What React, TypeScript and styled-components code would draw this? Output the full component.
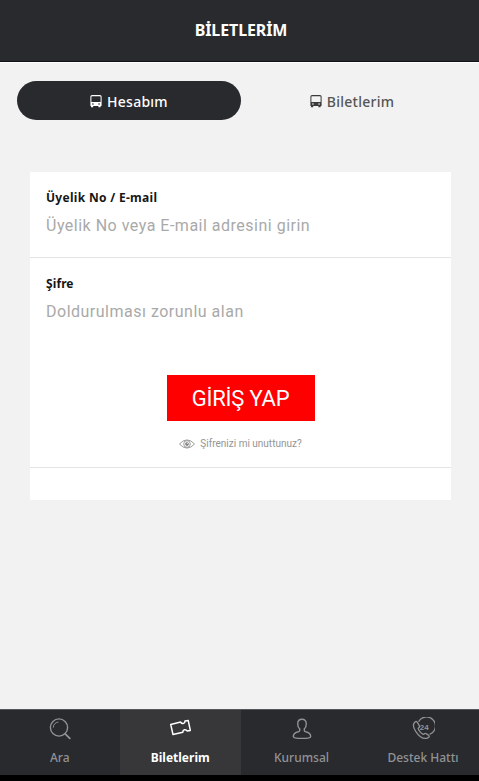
import React from "react";
import styled, { createGlobalStyle } from "styled-components";

const GlobalStyle = createGlobalStyle`
  * { box-sizing: border-box; }
  body { margin: 0; background: #f2f2f2; }
  button, input { font: inherit; border: 0; padding: 0; margin: 0; background: none; }
`;

const Screen = styled.div`
  display: flex;
  flex-direction: column;
  width: 100%;
  height: 781px;
  overflow: hidden;
  background: #f2f2f2;
  font-family: "Noto Sans", sans-serif;
`;

const Header = styled.header`
  flex: none;
  height: 62px;
  padding-top: 18px;
  background: #292a2e;
  border-bottom: 1px solid #101114;
  box-shadow: 0 1px 0 #fff;
  text-align: center;
`;

const Title = styled.h1`
  margin: 0;
  padding-left: 3px;
  color: #fff;
  font: 700 16px/24px "Noto Sans", sans-serif;
  letter-spacing: -0.1px;
`;

const Tabs = styled.nav`
  flex: none;
  display: grid;
  grid-template-columns: 224px 222px;
  padding: 19px 0 0 17px;
`;

const Tab = styled.button<{ $active?: boolean }>`
  display: flex;
  align-items: center;
  justify-content: center;
  gap: 5px;
  height: 39px;
  padding-top: 2px;
  border-radius: 20px;
  background: ${(p) => (p.$active ? "#292a2e" : "transparent")};
  color: ${(p) => (p.$active ? "#fff" : "#555")};
  font-size: 14px;
  font-weight: 500;
  letter-spacing: 0.25px;
  svg { color: ${(p) => (p.$active ? "#fff" : "#3b3b3b")}; }
`;

const Card = styled.form`
  flex: none;
  width: 421px;
  height: 328px;
  margin: 52px 0 0 30px;
  background: #fff;
`;

const Field = styled.label<{ $lined?: boolean }>`
  display: flex;
  flex-direction: column;
  height: 86px;
  padding: 16px 16px 0;
  border-bottom: 1px solid ${(p) => (p.$lined ? "#e4e4e4" : "transparent")};
`;

const FieldName = styled.span<{ $spacing: string }>`
  color: #161616;
  font-size: 12px;
  font-weight: 700;
  line-height: 20px;
  letter-spacing: ${(p) => p.$spacing};
`;

const Input = styled.input<{ $spacing: string }>`
  width: 100%;
  height: 24px;
  margin-top: 6px;
  outline: 0;
  color: #333;
  font: 400 16px/24px Roboto, sans-serif;
  letter-spacing: ${(p) => p.$spacing};
  &::placeholder { color: #a9a9a9; opacity: 1; }
`;

const Actions = styled.div`
  display: flex;
  flex-direction: column;
  align-items: center;
  height: 124px;
  padding-top: 31px;
  border-bottom: 1px solid #e4e4e4;
`;

const Submit = styled.button`
  width: 148px;
  height: 46px;
  padding-top: 2px;
  background: #ff0000;
  color: #fff;
  font: 400 22px/44px Roboto, sans-serif;
  letter-spacing: -0.2px;
`;

const Forgot = styled.a`
  display: flex;
  align-items: center;
  gap: 5px;
  margin-top: 15px;
  color: #949494;
  font: 400 10px/16px Roboto, sans-serif;
`;

const Footer = styled.footer`
  flex: none;
  display: grid;
  grid-template-columns: 119.5px 121.5px 121px 122px;
  height: 72px;
  margin-top: auto;
  overflow: hidden;
  background: #292a2e;
  border-top: 1px solid #55565a;
  border-bottom: 6px solid #000;
`;

const FooterItem = styled.a<{ $active?: boolean }>`
  display: flex;
  flex-direction: column;
  align-items: center;
  padding-top: 7px;
  background: ${(p) => (p.$active ? "#373739" : "transparent")};
  color: ${(p) => (p.$active ? "#fff" : "#929295")};
  font-size: 12px;
  font-weight: ${(p) => (p.$active ? 700 : 500)};
  line-height: 18px;
  white-space: nowrap;
  svg { flex: none; margin-bottom: 8px; }
`;

const BusIcon = () => (
  <svg width="12" height="13" viewBox="0 0 12 13" fill="currentColor">
    <path fillRule="evenodd" d="M2 0h8q1.6 0 1.6 1.6V11h-1v1.2H8.4V11H3.2v1.2H1V11H.4V1.6Q.4 0 2 0Zm0 1.2q-.6 0-.6.6V7h9.2V1.8q0-.6-.6-.6ZM2 8.4v1.2h1.8V8.4Zm6.2 0v1.2H10V8.4Z" />
  </svg>
);

const EyeIcon = () => (
  <svg width="16" height="10" viewBox="0 0 16 10" fill="none" stroke="#858585" strokeWidth=".8">
    <path d="M.5 5Q4 .9 8 .9T15.500 5Q12 9.100 8 9.100T.5 5Z" />
    <circle cx="8" cy="5" r="3.300" />
    <circle cx="8" cy="5" r="1.500" fill="#858585" />
    <path d="M8.100 4.900 9.300 3.400" stroke="#fff" />
  </svg>
);

const SearchIcon = () => (
  <svg width="24" height="24" viewBox="0 0 24 24" fill="none" stroke="currentColor" strokeWidth="1.400" strokeLinecap="round">
    <circle cx="11" cy="10.500" r="8.600" />
    <path d="m17.200 16.800 4.600 4.600" strokeWidth="1.800" />
    <path d="M5.300 10.200Q5.600 5.800 10 5.100" strokeWidth="1" />
  </svg>
);

const TicketIcon = () => (
  <svg width="24" height="24" viewBox="0 0 24 24" fill="none" stroke="currentColor" strokeWidth="1.500" strokeLinejoin="round">
    <path d="m2.700 7.400 10-2.300q1 1.900 2.900 1.300 1.400-.4 1.400-2.300l3.200-.7 2.100 10-3 .7q-1.100-1.700-2.800-1.300-1.700.5-1.700 2.400L5 17.500Z" />
  </svg>
);

const PersonIcon = () => (
  <svg width="24" height="24" viewBox="0 0 24 24" fill="none" stroke="currentColor" strokeWidth="1.400" strokeLinejoin="round">
    <path d="M12 2.200c-2.800 0-4.300 1.700-4.300 4.500 0 2.300.7 4.100 2 5.200v1.600c0 .7-.5 1-1.200 1.200-3.600.7-5.200 1.700-5.200 4.700 0 1.500 4.100 2 8.700 2s8.700-.5 8.700-2c0-3-1.600-4-5.200-4.700-.7-.2-1.200-.5-1.200-1.200v-1.600c1.300-1.100 2-2.900 2-5.200 0-2.800-1.500-4.500-4.300-4.500Z" />
  </svg>
);

const SupportIcon = () => (
  <svg width="24" height="24" viewBox="0 0 24 24" fill="none" stroke="currentColor" strokeWidth="1.300" strokeLinejoin="round">
    <path d="M7.600 4.600A9 9 0 1 1 18.600 17.400" />
    <path d="M4.300 4.700C1.900 6.500 2 10.300 4.700 14.300c3 4.600 7.500 7.700 11 7 1.700-.4 2.700-1.600 2.500-2.400-.1-.5-3.500-2.700-4.100-2.600-.7.100-1.100 1.200-1.900 1-1.700-.4-5-4.300-5-5.700 0-.9 1.400-1 1.400-1.800 0-.8-2.400-5.200-3.200-5.300Z" />
    <text x="8.800" y="13" fill="currentColor" stroke="none" fontFamily="Liberation Sans, sans-serif" fontSize="8" fontWeight="700" letterSpacing="-.1">24</text>
  </svg>
);

export default function App() {
  return (
    <Screen>
      <GlobalStyle />
      <Header><Title>BİLETLERİM</Title></Header>
      <Tabs>
        <Tab $active><BusIcon />Hesabım</Tab>
        <Tab><BusIcon />Biletlerim</Tab>
      </Tabs>
      <Card onSubmit={(e) => e.preventDefault()}>
        <Field $lined>
          <FieldName $spacing="0.3px">Üyelik No / E-mail</FieldName>
          <Input $spacing="0.5px" placeholder="Üyelik No veya E-mail adresini girin" />
        </Field>
        <Field>
          <FieldName $spacing="0.1px">Şifre</FieldName>
          <Input $spacing="0.5px" type="password" placeholder="Doldurulması zorunlu alan" />
        </Field>
        <Actions>
          <Submit type="submit">GİRİŞ YAP</Submit>
          <Forgot><EyeIcon />Şifrenizi mi unuttunuz?</Forgot>
        </Actions>
      </Card>
      <Footer>
        <FooterItem><SearchIcon />Ara</FooterItem>
        <FooterItem $active><TicketIcon />Biletlerim</FooterItem>
        <FooterItem><PersonIcon />Kurumsal</FooterItem>
        <FooterItem><SupportIcon />Destek Hattı</FooterItem>
      </Footer>
    </Screen>
  );
}
